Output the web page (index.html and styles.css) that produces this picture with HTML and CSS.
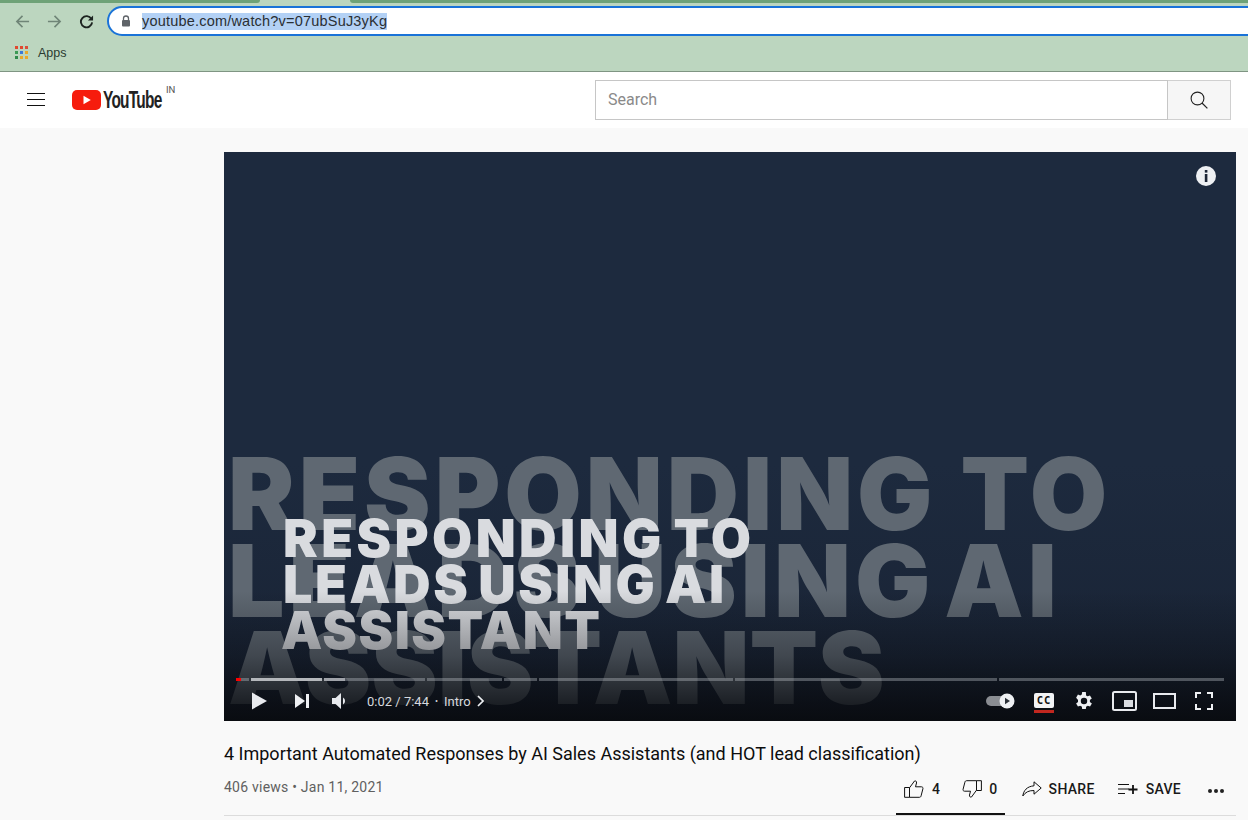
FILE: index.html
```html
<!DOCTYPE html>
<html lang="en">
<head>
<meta charset="utf-8">
<title>YouTube</title>
<link rel="stylesheet" href="styles.css">
</head>
<body>
<header class="chrome">
  <div class="tabstrip"><span class="tab-piece tab-a"></span><span class="tab-piece tab-b"></span></div>
  <div class="toolbar">
    <svg class="nav nav-back" viewBox="0 0 16 16"><path d="M15 8H2M8 2 2 8l6 6" fill="none" stroke="#6f8577" stroke-width="1.7"/></svg>
    <svg class="nav nav-fwd" viewBox="0 0 16 16"><path d="M1 8h13M8 2l6 6-6 6" fill="none" stroke="#6f8577" stroke-width="1.7"/></svg>
    <svg class="nav nav-reload" viewBox="0 0 16 16"><path d="M13.2 5.2A6 6 0 1 0 14 9" fill="none" stroke="#1d2420" stroke-width="2"/><path d="M15 1.5V7H9.5z" fill="#1d2420"/></svg>
    <div class="omnibox">
      <svg class="lock" viewBox="0 0 10 12"><path d="M2.5 5V3.5a2.5 2.5 0 0 1 5 0V5" fill="none" stroke="#5f6368" stroke-width="1.3"/><rect x="1" y="5" width="8" height="6.6" rx="1" fill="#5f6368"/></svg>
      <span class="url">youtube.com/watch?v=07ubSuJ3yKg</span>
    </div>
  </div>
  <div class="bookmarks">
    <svg class="apps" viewBox="0 0 14 14">
      <rect x="0" y="0" width="3" height="3" fill="#e0492f"/><rect x="5" y="0" width="3" height="3" fill="#e0492f"/><rect x="10" y="0" width="3" height="3" fill="#d9503a"/>
      <rect x="0" y="5" width="3" height="3" fill="#3c9a55"/><rect x="5" y="5" width="3" height="3" fill="#3b78d8"/><rect x="10" y="5" width="3" height="3" fill="#e9a82b"/>
      <rect x="0" y="10" width="3" height="3" fill="#2f8a4a"/><rect x="5" y="10" width="3" height="3" fill="#e9a82b"/><rect x="10" y="10" width="3" height="3" fill="#e9a82b"/>
    </svg>
    <span class="apps-label">Apps</span>
  </div>
</header>

<div class="masthead">
  <div class="mast-left">
    <svg class="burger" viewBox="0 0 18 14"><path d="M0 .5h18M0 6.500h18M0 12.500h18" stroke="#111" stroke-width="1"/></svg>
    <div class="logo">
      <svg class="logo-mark" viewBox="0 0 29 20"><rect width="29" height="20" rx="5" fill="#f61c0d"/><path d="M11.5 5.8v8.4l7.3-4.2z" fill="#fff"/></svg>
      <span class="logo-text">YouTube</span>
      <span class="logo-cc">IN</span>
    </div>
  </div>
  <div class="searchbox">
    <div class="search-input">Search</div>
    <div class="search-btn">
      <svg class="search-icon" viewBox="0 0 18 18"><circle cx="7.5" cy="7.5" r="6.4" fill="none" stroke="#222" stroke-width="1.1"/><path d="m12 12 5.4 5.4" stroke="#222" stroke-width="1.2"/></svg>
    </div>
  </div>
</div>

<main class="content">
  <section class="player">
    <div class="bigtext">
      <div class="big-line big-1">RESPONDING TO</div>
      <div class="big-line big-2">LEADS USING AI</div>
      <div class="big-line big-3">ASSISTANTS</div>
    </div>
    <div class="fronttext">
      <div class="front-line front-1">RESPONDING TO</div>
      <div class="front-line front-2">LEADS USING AI</div>
      <div class="front-line front-3">ASSISTANT</div>
    </div>
    <svg class="info" viewBox="0 0 20 20"><circle cx="10" cy="10" r="10" fill="#eef0f3"/><rect x="8.8" y="4" width="2.6" height="2.6" fill="#1c2536"/><rect x="8.8" y="8" width="2.6" height="8" fill="#1c2536"/></svg>
    <div class="shade"></div>
    <div class="controls">
      <div class="progress">
        <span class="seg seg-1"><i class="played"></i></span>
        <span class="seg seg-2"></span>
        <span class="seg seg-3"></span>
        <span class="seg seg-5"></span>
        <span class="seg seg-6"></span>
        <span class="seg seg-7"></span>
        <span class="seg seg-8"></span>
        <span class="seg seg-9"></span>
      </div>
      <div class="ctl-row">
        <div class="ctl-left">
          <svg class="ic ic-play" viewBox="0 0 16 18"><path d="M0 0v18l16-9z" fill="#e8eaee"/></svg>
          <svg class="ic ic-next" viewBox="0 0 14 14"><path d="M0 0v14l10-7z" fill="#eef0f3"/><rect x="11" y="0" width="3" height="14" fill="#eef0f3"/></svg>
          <svg class="ic ic-vol" viewBox="0 0 16 16"><path d="M0 5v6h3.5L9 16V0L3.500 5z" fill="#e8eaee"/><path d="M11 4.500a4 4 0 0 1 0 7z" fill="#e8eaee"/></svg>
          <span class="time">0:02 / 7:44</span>
          <span class="dot">•</span>
          <span class="chapter">Intro</span>
          <svg class="ic ic-chev" viewBox="0 0 7 12"><path d="m1 1 5 5-5 5" fill="none" stroke="#eef0f3" stroke-width="1.7"/></svg>
        </div>
        <div class="ctl-right">
          <svg class="ic ic-auto" viewBox="0 0 29 16"><rect x="0" y="3" width="24" height="10" rx="5" fill="#8a8d92"/><circle cx="21" cy="8" r="7.500" fill="#eef0f3"/><path d="M19 4.800v6.400l5-3.200z" fill="#2b3038"/></svg>
          <div class="cc-wrap"><span class="cc">CC</span><span class="cc-bar"></span></div>
          <svg class="ic ic-gear" viewBox="0 0 24 24"><path d="M19.400 13a7.500 7.500 0 0 0 0-2l2.100-1.600-2-3.500-2.500 1a7.500 7.500 0 0 0-1.700-1L15 2.200h-4l-.4 2.700a7.500 7.500 0 0 0-1.700 1l-2.500-1-2 3.500L6.500 11a7.500 7.500 0 0 0 0 2l-2.100 1.600 2 3.500 2.500-1a7.500 7.500 0 0 0 1.700 1l.4 2.700h4l.4-2.700a7.500 7.500 0 0 0 1.700-1l2.500 1 2-3.500zM13 15.500a3.500 3.500 0 1 1 0-7 3.500 3.500 0 0 1 0 7z" fill="#eef0f3" transform="translate(-1 0)"/></svg>
          <svg class="ic ic-mini" viewBox="0 0 25 20"><rect x="1" y="1" width="23" height="18" rx="1.500" fill="none" stroke="#e8eaee" stroke-width="2"/><rect x="12" y="9" width="9" height="7" fill="#d9dce1"/></svg>
          <svg class="ic ic-theater" viewBox="0 0 23 16"><rect x="1" y="1" width="21" height="14" fill="none" stroke="#e8eaee" stroke-width="2"/></svg>
          <svg class="ic ic-full" viewBox="0 0 18 18"><path d="M1 6V1h5M12 1h5v5M17 12v5h-5M6 17H1v-5" fill="none" stroke="#eef0f3" stroke-width="2"/></svg>
        </div>
      </div>
    </div>
  </section>

  <h1 class="title">4 Important Automated Responses by AI Sales Assistants (and HOT lead classification)</h1>

  <div class="meta">
    <span class="views">406 views • Jan 11, 2021</span>
    <div class="actions">
      <div class="act act-like">
        <svg class="act-ic" viewBox="0 0 20 18"><path d="M5.500 7.500H.6v9.800h4.900zM5.500 7.800 10.500 1c1.500-.4 2.300.6 2 2l-1 3.800h6c1.200 0 1.700 1 1.400 2l-1.800 7c-.2 1-.8 1.500-1.800 1.500H5.500" fill="none" stroke="#111" stroke-width="1"/></svg>
        <b class="act-label">4</b>
      </div>
      <div class="act act-dislike">
        <svg class="act-ic" viewBox="0 0 20 18"><path d="M14.500 10.500h4.900V.7h-4.900zM14.500 10.200 9.500 17c-1.500.4-2.300-.6-2-2l1-3.800h-6c-1.200 0-1.700-1-1.400-2l1.800-7c.2-1 .8-1.500 1.800-1.500h9.800" fill="none" stroke="#111" stroke-width="1"/></svg>
        <b class="act-label">0</b>
      </div>
      <div class="act act-share">
        <svg class="act-ic" viewBox="0 0 20 16"><path d="M12 .8 19.200 7 12 13.200V9.500C6.500 9.500 3.500 11.200.8 15c.8-5.500 4-9.500 11.200-10.200z" fill="none" stroke="#111" stroke-width="1"/></svg>
        <b class="act-label">SHARE</b>
      </div>
      <div class="act act-save">
        <svg class="act-ic" viewBox="0 0 20 12"><path d="M0 1.500h11M0 6h11M0 10.500h7" stroke="#111" stroke-width="1"/><path d="M15 2v9M10.500 6.500h9" stroke="#111" stroke-width="1.800"/></svg>
        <b class="act-label">SAVE</b>
      </div>
      <div class="more"><i></i><i></i><i></i></div>
      <span class="like-underline"></span>
    </div>
  </div>
</main>
</body>
</html>
```

FILE: styles.css
```css
* { box-sizing: border-box; }

html, body {
  margin: 0;
  height: 820px;
  overflow: hidden;
}

body {
  background: #f9f9f9;
  font-family: "Roboto", "Liberation Sans", sans-serif;
  color: #111;
}

/* browser chrome */
.chrome {
  height: 72px;
  background: #bcd6bf;
  border-bottom: 1px solid #7f9583;
  display: flex;
  flex-direction: column;
}

.tabstrip {
  height: 3px;
  display: flex;
  background: #bcd6bf;
}

.tab-piece { display: block; height: 3px; background: #6ea277; }
.tab-a { width: 260px; border-radius: 0 0 6px 0; }
.tab-b { flex: 1; margin-left: 90px; border-radius: 0 0 0 6px; }

.toolbar {
  height: 33px;
  display: flex;
  align-items: center;
  padding: 3px 0 0 15px;
}

.nav { width: 15px; height: 15px; display: block; flex: none; }
.nav-fwd { margin-left: 17px; }
.nav-reload { margin-left: 17px; }

.omnibox {
  margin-left: 13px;
  flex: 1;
  margin-right: -30px;
  height: 30px;
  background: #fff;
  border: 2px solid #1a73d8;
  border-radius: 15px;
  display: flex;
  align-items: center;
  padding-left: 12px;
}

.lock { width: 10px; height: 12px; display: block; margin-right: 11px; }

.url {
  font-family: "Liberation Sans", Arial, sans-serif;
  font-size: 14.5px;
  line-height: 17px;
  letter-spacing: 0.2px;
  background: #b3d1f5;
  color: #2a2f33;
}

.bookmarks {
  height: 35px;
  display: flex;
  align-items: center;
  padding: 0 0 2px 15px;
}

.apps { width: 14px; height: 14px; display: block; }

.apps-label {
  margin-left: 9px;
  font-family: "Liberation Sans", Arial, sans-serif;
  font-size: 12.5px;
  color: #2a3a30;
}

/* masthead */
.masthead {
  height: 56px;
  background: #fff;
  display: flex;
  justify-content: space-between;
  padding-right: 17px;
}

.mast-left {
  display: flex;
  align-items: flex-start;
  padding: 21px 0 0 27px;
}

.burger { width: 18px; height: 14px; display: block; }

.logo {
  margin-left: 27px;
  display: flex;
  align-items: flex-start;
  position: relative;
  margin-top: -3px;
}

.logo-mark { width: 29px; height: 20px; display: block; margin-top: 0; }

.logo-text {
  margin-left: 2px;
  font-family: "Liberation Sans", sans-serif;
  font-size: 24px;
  line-height: 20px;
  font-weight: 700;
  letter-spacing: -1.2px;
  color: #222;
  transform: scaleX(0.645);
  transform-origin: left top;
  width: 60px;
}

.logo-cc {
  position: absolute;
  left: 94px;
  top: -6px;
  font-family: "Roboto", sans-serif;
  font-size: 9.5px;
  line-height: 12px;
  color: #555;
}

.searchbox {
  display: flex;
  height: 40px;
  margin-top: 8px;
}

.search-input {
  width: 573px;
  height: 40px;
  background: #fff;
  border: 1px solid #c6c6c6;
  padding-left: 12px;
  font-size: 16px;
  line-height: 38px;
  color: #8a8a8a;
}

.search-btn {
  width: 63px;
  height: 40px;
  background: #f6f6f6;
  border: 1px solid #d0d0d0;
  border-left: none;
  display: flex;
  align-items: center;
  justify-content: center;
}

.search-icon { width: 18px; height: 18px; display: block; }

/* main */
.content {
  padding: 24px 12px 0 224px;
}

.player {
  position: relative;
  width: 1012px;
  height: 569px;
  overflow: hidden;
  background: linear-gradient(#1d2a3e 0%, #1d2a3e 55%, #1a2537 85%, #172030 100%);
}

.bigtext,
.fronttext {
  position: absolute;
  left: 0;
  top: 0;
  font-family: "Inter", "Liberation Sans", Arial, sans-serif;
  font-weight: 900;
  white-space: nowrap;
}

.big-line {
  position: absolute;
  font-size: 100px;
  line-height: 100px;
  color: #5f6872;
}

.big-1 { left: 4px; top: 292px; letter-spacing: 4px; word-spacing: 0; }
.big-2 { left: 4px; top: 379px; letter-spacing: 4px; word-spacing: -14px; }
.big-3 { left: 4px; top: 466px; letter-spacing: 0; }

.front-line {
  position: absolute;
  font-size: 52px;
  line-height: 52px;
  color: #d9dbdf;
}

.front-1 { left: 59px; top: 361px; letter-spacing: 3.4px; word-spacing: -5px; }
.front-2 { left: 59px; top: 407px; letter-spacing: 2.5px; word-spacing: -5px; }
.front-3 { left: 57px; top: 453px; letter-spacing: 1.5px; }

.info {
  position: absolute;
  right: 20px;
  top: 14px;
  width: 20px;
  height: 20px;
}

.shade {
  position: absolute;
  left: 0;
  right: 0;
  bottom: 0;
  height: 130px;
  background: linear-gradient(rgba(8, 10, 14, 0), rgba(8, 10, 14, 0.35) 50%, rgba(8, 10, 14, 0.92));
}

.controls {
  position: absolute;
  left: 12px;
  right: 12px;
  bottom: 0;
  height: 43px;
}

.progress {
  height: 3px;
  display: flex;
  gap: 2px;
}

.seg {
  display: block;
  height: 3px;
  background: rgba(200, 205, 212, 0.35);
  position: relative;
}

.seg-1 { width: 13px; }
.seg-2 { width: 71px; background: #b4b7bb; }
.seg-3 {
  width: 101px;
  background: linear-gradient(90deg, #a0a3a9 21px, rgba(200, 205, 212, 0.35) 21px);
}
.seg-5 { width: 75px; }
.seg-6 { width: 33px; }
.seg-7 { width: 194px; }
.seg-8 { width: 262px; }
.seg-9 { flex: 1; }

.played {
  position: absolute;
  left: 0;
  top: 0;
  width: 5px;
  height: 3px;
  background: #f00;
}

.ctl-row {
  display: flex;
  justify-content: space-between;
  align-items: center;
  height: 40px;
}

.ctl-left,
.ctl-right {
  display: flex;
  align-items: center;
}

.ic { display: block; flex: none; }
.ic-play { width: 15px; height: 18px; margin-left: 16px; }
.ic-next { width: 14px; height: 14px; margin-left: 28px; }
.ic-vol { width: 16px; height: 16px; margin-left: 23px; }

.time,
.dot,
.chapter {
  font-family: "Roboto", sans-serif;
  font-size: 13px;
  color: #d6d9de;
}

.time { margin-left: 19px; }
.dot { margin-left: 6px; font-size: 9px; }
.chapter { margin-left: 6px; }
.ic-chev { width: 7px; height: 12px; margin-left: 6px; }

.ic-auto { width: 29px; height: 16px; }

.cc-wrap {
  margin: 4px 0 0 19px;
  width: 20px;
  display: flex;
  flex-direction: column;
  align-items: center;
  height: 20px;
}

.cc {
  display: block;
  width: 20px;
  height: 15px;
  border-radius: 2px;
  background: #f2f3f5;
  color: #111;
  font-family: "DejaVu Sans Mono", monospace;
  font-size: 10.5px;
  line-height: 15px;
  font-weight: 700;
  letter-spacing: 1px;
  text-align: center;
}

.cc-bar {
  display: block;
  width: 20px;
  height: 3px;
  margin-top: 2px;
  background: #c1271f;
}

.ic-gear { width: 22px; height: 22px; margin-left: 19px; }
.ic-mini { width: 25px; height: 20px; margin-left: 17px; }
.ic-theater { width: 23px; height: 16px; margin-left: 16px; }
.ic-full { width: 18px; height: 18px; margin-left: 19px; margin-right: 11px; }

.title {
  margin: 23px 0 0;
  font-size: 18px;
  line-height: 20px;
  font-weight: 400;
  color: #0d0d0d;
}

.meta {
  margin-top: 7px;
  display: flex;
  justify-content: space-between;
  position: relative;
  height: 49px;
}

.meta::after {
  content: "";
  position: absolute;
  left: 0;
  right: 0;
  top: 44px;
  height: 1px;
  background: #dcdcdc;
}

.views {
  font-size: 14px;
  line-height: 32px;
  height: 32px;
  color: #606060;
  letter-spacing: 0.23px;
}

.actions {
  display: flex;
  align-items: center;
  height: 30px;
  margin-top: 3px;
  position: relative;
  padding-right: 12px;
}

.act {
  display: flex;
  align-items: center;
}

.act-ic { display: block; flex: none; }
.act-label {
  font-size: 14px;
  font-weight: 500;
  color: #1a1a1a;
  letter-spacing: 0.3px;
}

.act-like .act-ic { width: 20px; height: 18px; margin-right: 8px; }
.act-dislike { margin-left: 22px; }
.act-dislike .act-ic { width: 20px; height: 18px; margin-right: 7px; }
.act-share { margin-left: 24px; }
.act-share .act-ic { width: 20px; height: 16px; margin-right: 7px; }
.act-save { margin-left: 23px; }
.act-save .act-ic { width: 20px; height: 12px; margin-right: 8px; }

.more {
  margin-left: 27px;
  display: flex;
  gap: 2px;
  margin-top: 3px;
}

.more i {
  display: block;
  width: 4px;
  height: 4px;
  border-radius: 50%;
  background: #222;
}

.like-underline {
  position: absolute;
  left: -8px;
  top: 39px;
  width: 109px;
  height: 2px;
  background: #111;
  z-index: 1;
}
```
